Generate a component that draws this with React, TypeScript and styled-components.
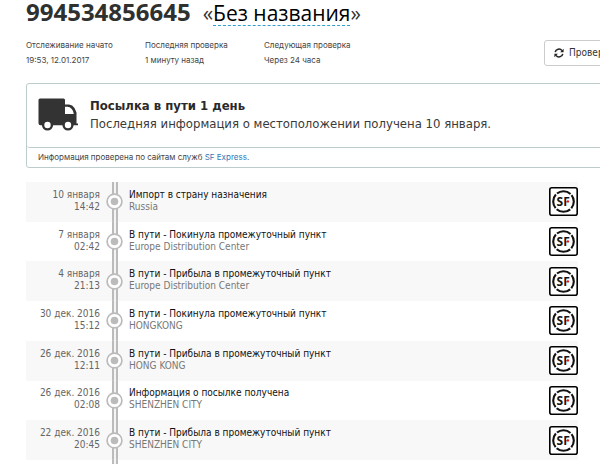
import React from "react";
import styled, { createGlobalStyle } from "styled-components";

const GlobalStyle = createGlobalStyle`
  *, *::before, *::after { box-sizing: border-box; }
  body {
    margin: 0;
    background: #fff;
    color: #333;
    font-family: "DejaVu Sans Condensed", "Noto Sans", sans-serif;
    font-size: 10px;
    overflow: hidden;
  }
`;

const Page = styled.main`
  padding-left: 26px;
  overflow: hidden;
`;

const Title = styled.h1`
  display: flex;
  align-items: baseline;
  gap: 12px;
  margin: 0;
  font: 400 21px/24px "Open Sans", "Noto Sans", sans-serif;
  white-space: nowrap;
`;

const TrackNumber = styled.span`
  font-size: 24px;
  font-weight: 700;
  color: #2f312f;
`;

const ParcelName = styled.span`
  color: #000;
  text-decoration-line: underline;
  text-decoration-style: dashed;
  text-decoration-color: #2f9fd0;
  text-decoration-thickness: 1px;
  text-decoration-skip-ink: none;
  text-underline-offset: 4px;
`;

const MetaBar = styled.div`
  display: flex;
  align-items: center;
  justify-content: space-between;
  margin: 13px -29px 0 0;
`;

const MetaList = styled.dl`
  display: grid;
  grid-template-columns: repeat(3, 119px);
  margin: 0;
  font: 8px/15px Inter, "Noto Sans", sans-serif;
  color: #444;
`;

const MetaLabel = styled.dt``;

const MetaValue = styled.dd`
  margin: 0;
`;

const CheckButton = styled.button`
  display: flex;
  flex: none;
  align-items: center;
  gap: 5px;
  height: 26px;
  padding: 0 8px 0 9px;
  border: 1px solid #ccc;
  border-radius: 3px;
  background: #fff;
  color: #333;
  font: 10px/14px "DejaVu Sans Condensed", "Noto Sans", sans-serif;
  white-space: nowrap;
`;

const Card = styled.section`
  margin-top: 15px;
  margin-right: -4px;
  border: 1px solid #bccbcb;
  border-radius: 3px;
`;

const Status = styled.div`
  display: flex;
  align-items: center;
  gap: 12px;
  min-height: 64px;
  padding: 0 11px 2px;
  border-bottom: 1px solid #bccbcb;
  border-radius: 0 0 3px 3px;
`;

const StatusText = styled.p`
  margin: 0;
  font-size: 13px;
  line-height: 18px;
  color: #3a3a3a;
`;

const StatusTitle = styled.h2`
  margin: 0;
  font-size: 13px;
  line-height: 18px;
  color: #2a2a2a;
`;

const CardNote = styled.p`
  margin: 0;
  padding: 2px 11px;
  font: 8px/15px Inter, "Noto Sans", sans-serif;
  color: #444;
`;

const Link = styled.a`
  color: #337ab7;
  text-decoration: none;
`;

const Events = styled.ol`
  display: grid;
  grid-auto-rows: 1fr;
  min-height: 278px;
  margin: 14px 22px 0 0;
  padding: 0;
  list-style: none;
`;

const EventRow = styled.li`
  display: grid;
  grid-template-columns: 74px 29px minmax(0, 1fr) 29px;
  align-items: center;
  line-height: 12px;

  &:nth-child(odd) {
    background: #f8f8f8;
  }
`;

const When = styled.time`
  padding-bottom: 2px;
  text-align: right;
  color: #666;
`;

const Line = styled.span`
  display: block;
`;

const Rail = styled.span`
  display: flex;
  align-items: center;
  justify-content: center;
  align-self: stretch;
  background: linear-gradient(
      90deg,
      #bbb 0 2px,
      #f4f4f4 2px 4px,
      #bbb 4px 6px
    )
    center / 6px 100% no-repeat;
`;

const RailEnd = styled(Rail)`
  width: 29px;
  height: 10px;
  margin-left: 74px;
`;

const Details = styled.div`
  padding-bottom: 2px;
  color: #777;
`;

const EventName = styled.strong`
  display: block;
  font-weight: 400;
  color: #111;
`;

const Marker = () => (
  <svg width="17" height="17" viewBox="0 0 17 17" aria-hidden="true">
    <circle cx="8.5" cy="8.5" r="7.4" fill="#fff" stroke="#bbb" strokeWidth="1.7" />
    <circle cx="8.5" cy="8.5" r="3.8" fill="#bbb" />
  </svg>
);

const Truck = () => (
  <svg width="40" height="33" viewBox="0 0 40 33" aria-hidden="true">
    <path
      fill="#333"
      fillRule="evenodd"
      d="M2 .5h23.500q1.500 0 1.500 1.500v4.500h4q3.500.3 5.500 3.500l2 4.500v11h1.500v1.700h-37.500q-2-.2-2-2V2Q.5.5 2 .5zM27 8.800v7.200h8.800q-.3-3.300-2.300-5.300-1.700-1.900-4-1.900z"
    />
    <circle cx="9.500" cy="27" r="4.400" fill="#fff" stroke="#333" strokeWidth="2.400" />
    <circle cx="30" cy="27" r="4.400" fill="#fff" stroke="#333" strokeWidth="2.400" />
  </svg>
);

const Refresh = () => (
  <svg width="10" height="10" viewBox="0 0 10 10" fill="none" stroke="#222" strokeWidth="1.500" aria-hidden="true">
    <path d="M1.200 4.200A3.800 3.800 0 0 1 8 2.600M8.800 5.800A3.800 3.800 0 0 1 2 7.400" />
    <path d="M9.600.7v3.500H6.100zM.4 9.300V5.800h3.500z" fill="#222" stroke="none" />
  </svg>
);

const SfLogo = () => (
  <svg width="29" height="29" viewBox="0 0 29 29" role="img" aria-label="SF Express">
    <rect x=".8" y=".8" width="27.400" height="27.400" rx="2" fill="#fff" stroke="#000" strokeWidth="1.600" />
    <circle
      cx="14.500"
      cy="14.500"
      r="10.300"
      fill="none"
      stroke="#111"
      strokeWidth="2.100"
      strokeDasharray="14.680 1.500"
      strokeDashoffset="-8.840"
    />
    <text x="14.200" y="18.800" textAnchor="middle" fontFamily="Open Sans, sans-serif" fontWeight="700" fontSize="12" fill="#111">
      SF
    </text>
    <path d="M17.500 12.900h4v3h-4z" fill="#fff" />
    <circle cx="18.900" cy="14.400" r="1.200" fill="#e8141c" />
  </svg>
);

const META = [
  ["Отслеживание начато", "19:53, 12.01.2017"],
  ["Последняя проверка", "1 минуту назад"],
  ["Следующая проверка", "Через 24 часа"],
];

const LEFT = "В пути - Покинула промежуточный пункт";
const ARRIVED = "В пути - Прибыла в промежуточный пункт";

const EVENTS = [
  { date: "10 января", time: "14:42", name: "Импорт в страну назначения", place: "Russia" },
  { date: "7 января", time: "02:42", name: LEFT, place: "Europe Distribution Center" },
  { date: "4 января", time: "21:13", name: ARRIVED, place: "Europe Distribution Center" },
  { date: "30 дек. 2016", time: "15:12", name: LEFT, place: "HONGKONG" },
  { date: "26 дек. 2016", time: "12:11", name: ARRIVED, place: "HONG KONG" },
  { date: "26 дек. 2016", time: "02:08", name: "Информация о посылке получена", place: "SHENZHEN CITY" },
  { date: "22 дек. 2016", time: "20:45", name: ARRIVED, place: "SHENZHEN CITY" },
];

export default function App() {
  return (
    <>
      <GlobalStyle />
      <Page>
        <Title>
          <TrackNumber>994534856645</TrackNumber>
          <span>
            «<ParcelName>Без названия</ParcelName>»
          </span>
        </Title>
        <MetaBar>
          <MetaList>
            {META.map(([label, value]) => (
              <div key={label}>
                <MetaLabel>{label}</MetaLabel>
                <MetaValue>{value}</MetaValue>
              </div>
            ))}
          </MetaList>
          <CheckButton type="button">
            <Refresh />
            Проверить
          </CheckButton>
        </MetaBar>
        <Card>
          <Status>
            <Truck />
            <div>
              <StatusTitle>Посылка в пути 1 день</StatusTitle>
              <StatusText>Последняя информация о местоположении получена 10 января.</StatusText>
            </div>
          </Status>
          <CardNote>
            Информация проверена по сайтам служб <Link href="#sf">SF Express</Link>.
          </CardNote>
        </Card>
        <Events>
          {EVENTS.map((event) => (
            <EventRow key={event.date + event.time}>
              <When>
                <Line>{event.date}</Line>
                <Line>{event.time}</Line>
              </When>
              <Rail>
                <Marker />
              </Rail>
              <Details>
                <EventName>{event.name}</EventName>
                {event.place}
              </Details>
              <SfLogo />
            </EventRow>
          ))}
        </Events>
        <RailEnd />
      </Page>
    </>
  );
}
